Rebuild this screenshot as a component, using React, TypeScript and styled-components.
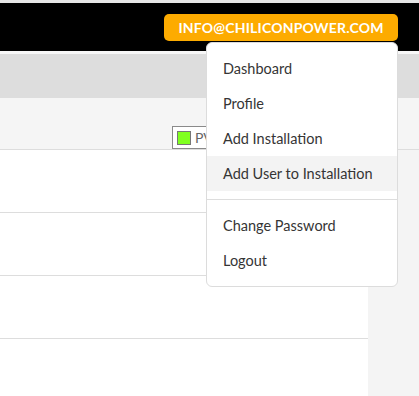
import React from "react";
import styled, { createGlobalStyle } from "styled-components";

const GlobalStyle = createGlobalStyle`
  html, body {
    margin: 0;
    padding: 0;
    background: #ffffff;
    font-family: "Lato", "Noto Sans", sans-serif;
  }
`;

const Page = styled.div`
  width: 419px;
  height: 396px;
  overflow: hidden;
  position: relative;
  display: flex;
  flex-direction: column;
  border-top: 3px solid #e6e6e6;
  box-sizing: border-box;
`;

const Header = styled.header`
  height: 51px;
  background: #000000;
  display: flex;
  justify-content: flex-end;
  align-items: flex-start;
  padding: 11px 21px 0 0;
  box-sizing: border-box;
  border-bottom: 3px solid #f7f7f7;
  flex-shrink: 0;
`;

const UserButton = styled.button`
  height: 27px;
  width: 234px;
  border: none;
  border-radius: 5px;
  background: #fdab00;
  color: #ffffff;
  font-family: inherit;
  font-weight: 700;
  font-size: 14px;
  letter-spacing: 0.2px;
  padding: 0;
  cursor: pointer;
`;

const SubBar = styled.div`
  height: 44px;
  background: #dddddd;
  flex-shrink: 0;
`;

const Toolbar = styled.div`
  height: 52px;
  background: #f5f5f5;
  border-bottom: 1px solid #dddddd;
  box-sizing: border-box;
  display: flex;
  align-items: flex-end;
  padding: 0 0 0 172px;
  flex-shrink: 0;
`;

const Legend = styled.div`
  height: 23px;
  border: 1px solid #8a8a8a;
  box-sizing: border-box;
  display: flex;
  align-items: center;
  gap: 4px;
  padding: 0 4px;
  background: #ffffff;
  color: #666666;
  font-size: 14px;
`;

const Swatch = styled.span<{ $color: string }>`
  width: 14px;
  height: 14px;
  box-sizing: border-box;
  border: 1px solid #777777;
  background: ${(p) => p.$color};
  display: inline-block;
`;

const Body = styled.div`
  flex: 1;
  display: grid;
  grid-template-columns: 368px 1fr;
`;

const Table = styled.div`
  display: flex;
  flex-direction: column;
  background: #ffffff;
`;

const Row = styled.div`
  height: 63px;
  border-bottom: 1px solid #dddddd;
  box-sizing: border-box;
`;

const Aside = styled.div`
  background: #f4f4f4;
`;

const Menu = styled.div`
  position: absolute;
  top: 39px;
  left: 206px;
  width: 192px;
  box-sizing: border-box;
  background: #ffffff;
  border: 1px solid #dcdcdc;
  border-radius: 6px;
  padding: 8px 0;
  display: flex;
  flex-direction: column;
`;

const MenuItem = styled.a<{ $active?: boolean }>`
  height: 35px;
  display: flex;
  align-items: center;
  padding: 0 16px 1px;
  box-sizing: border-box;
  font-size: 14.5px;
  color: #353535;
  background: ${(p) => (p.$active ? "#f3f3f3" : "transparent")};
  text-decoration: none;
  cursor: pointer;
`;

const Divider = styled.hr`
  border: none;
  border-top: 1px solid #dddddd;
  margin: 8px 0;
`;

export default function App() {
  return (
    <>
      <GlobalStyle />
      <Page>
        <Header>
          <UserButton>INFO@CHILICONPOWER.COM</UserButton>
        </Header>
        <SubBar />
        <Toolbar>
          <Legend>
            <Swatch $color="#80ff20" />
            PV
          </Legend>
        </Toolbar>
        <Body>
          <Table>
            <Row />
            <Row />
            <Row />
            <Row />
          </Table>
          <Aside />
        </Body>
        <Menu>
          <MenuItem>Dashboard</MenuItem>
          <MenuItem>Profile</MenuItem>
          <MenuItem>Add Installation</MenuItem>
          <MenuItem $active>Add User to Installation</MenuItem>
          <Divider />
          <MenuItem>Change Password</MenuItem>
          <MenuItem>Logout</MenuItem>
        </Menu>
      </Page>
    </>
  );
}
